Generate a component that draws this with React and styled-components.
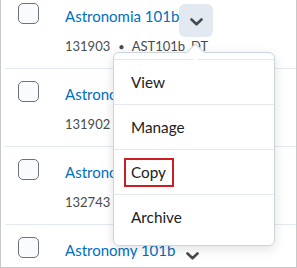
import React from 'react'
import styled, { createGlobalStyle } from 'styled-components'

const GlobalStyle = createGlobalStyle`
  html, body {
    margin: 0;
    padding: 0;
    background: #ffffff;
  }
  body {
    font-family: Lato, "Open Sans", sans-serif;
  }
`;

const courses = [
  { id: 1, name: 'Astronomia 101b', code: '131903', short: 'AST101b_DT', open: true },
  { id: 2, name: 'Astronomy 101b', code: '131902', short: 'AST101b_DT' },
  { id: 3, name: 'Astronomy 101b', code: '132743', short: 'AST101b_DT' },
  { id: 4, name: 'Astronomy 101b', code: '132744', short: 'AST101b_DT' },
];

const menuItems = ['View', 'Manage', 'Copy', 'Archive'];

const Chevron = () => (
  <svg width="13" height="8" viewBox="0 0 13 8">
    <path d="M1.5 1.5 L6.5 6.3 L11.5 1.5" fill="none" stroke="#494c4e" strokeWidth="2.6"
      strokeLinecap="round" strokeLinejoin="round" />
  </svg>
);

const CourseRow = ({ course }) => (
  <Row>
    <Checkbox />
    <Info>
      <TitleLine>
        <Title>{course.name}</Title>
        <MenuButton active={course.open}><Chevron /></MenuButton>
      </TitleLine>
      <Meta>
        {course.code}
        <Dot>•</Dot>
        {course.short}
      </Meta>
    </Info>
  </Row>
);

const App = () => {
  return (
    <>
      <GlobalStyle />
      <Frame>
        <List>
          {courses.map(c => <CourseRow key={c.id} course={c} />)}
        </List>
        <Dropdown>
          <Pointer />
          {menuItems.map(item => (
            <MenuItem key={item}>
              {item === 'Copy' ? <Highlight>{item}</Highlight> : item}
            </MenuItem>
          ))}
        </Dropdown>
      </Frame>
    </>
  )
};

export default App

const Frame = styled.div`
position: relative;
box-sizing: border-box;
width: 297px;
height: 268px;
overflow: hidden;
border: 1px solid #c9c9c9;
border-top: none;
background: #fff;
`;

const List = styled.div`
margin: -9px 0 0 4px;
display: flex;
flex-direction: column;
`;

const Row = styled.div`
display: flex;
align-items: flex-start;
box-sizing: border-box;
flex: 0 0 78px;
height: 78px;
padding: 12px 0 0 13px;
border-bottom: 1px solid #e3e9f1;
`;

const Checkbox = styled.div`
box-sizing: border-box;
flex: 0 0 21px;
width: 21px;
height: 21px;
border: 1px solid #6e7376;
border-radius: 5px;
background: #f9fbff;
`;

const Info = styled.div`
display: flex;
flex-direction: column;
margin-left: 26px;
`;

const TitleLine = styled.div`
display: flex;
align-items: flex-start;
`;

const Title = styled.span`
margin-top: 3px;
font-size: 15px;
line-height: 20px;
color: #006fbf;
white-space: nowrap;
`;

const MenuButton = styled.div`
display: flex;
align-items: center;
justify-content: center;
width: 34px;
height: 33px;
margin: 1px 0 0 0;
padding-top: 2px;
box-sizing: border-box;
border-radius: 6px;
background: ${p => (p.active ? '#e3e9f1' : 'transparent')};
`;

const Meta = styled.div`
font-size: 13px;
line-height: 18px;
color: #494c4e;
white-space: nowrap;
`;

const Dot = styled.span`
margin: 0 7px 0 8px;
font-size: 11px;
`;

const Dropdown = styled.div`
position: absolute;
left: 112px;
top: 52px;
width: 162px;
box-sizing: border-box;
padding: 6px 0;
background: #fff;
border: 1px solid #cdd5dc;
border-radius: 6px;
box-shadow: 0 3px 12px rgba(0, 0, 0, 0.12);
`;

const Pointer = styled.div`
position: absolute;
left: 75px;
top: -7px;
width: 12px;
height: 12px;
background: #fff;
border-top: 1px solid #cdd5dc;
border-left: 1px solid #cdd5dc;
transform: rotate(45deg);
`;

const MenuItem = styled.div`
display: flex;
align-items: center;
height: 44px;
padding-left: 17px;
font-size: 15.3px;
color: #202122;
border-top: 1px solid #e3e9f1;
&:first-of-type {
  border-top: none;
}
`;

const Highlight = styled.span`
display: inline-flex;
align-items: center;
box-sizing: border-box;
width: 50px;
height: 29px;
margin-left: -7px;
padding-left: 5px;
border: 2px solid #cc1f24;
`;
